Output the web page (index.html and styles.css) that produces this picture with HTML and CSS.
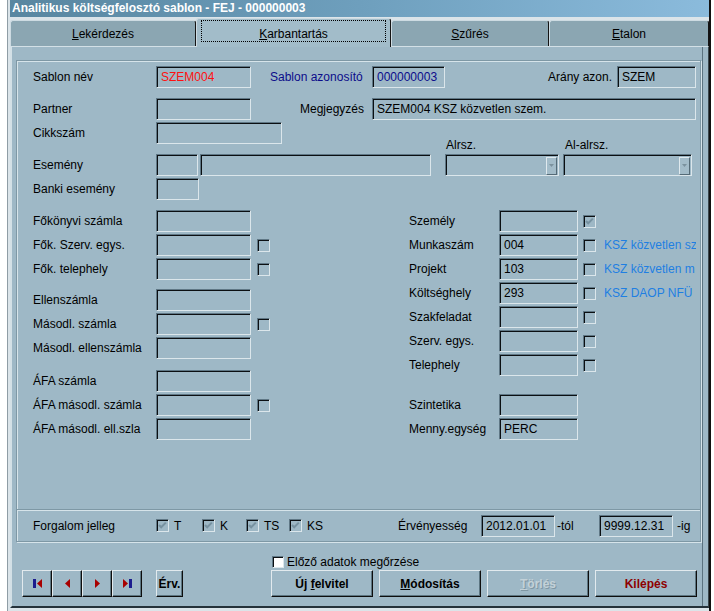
FILE: index.html
```html
<!DOCTYPE html>
<html lang="hu">
<head>
<meta charset="utf-8">
<title>Analitikus költségfelosztó sablon</title>
<link rel="stylesheet" href="styles.css">
</head>
<body>
<div class="win">
  <div class="titlebar">Analitikus költségfelosztó sablon - FEJ - 000000003</div>
  <div class="tabs">
    <div class="tab t1"><span><u>L</u>ekérdezés</span></div>
    <div class="tab t2 active"><span><u>K</u>arbantartás</span></div>
    <div class="tab t3"><span><u>S</u>zűrés</span></div>
    <div class="tab t4"><span><u>E</u>talon</span></div>
  </div>
  <div class="panel">
    <div class="group main">
      <div class="row">
        <span class="lbl lw">Sablon név</span>
        <span class="inp w95 red">SZEM004</span>
        <span class="lbl navy az">Sablon azonosító</span>
        <span class="inp w73 navy">000000003</span>
        <span class="lbl arany">Arány azon.</span>
        <span class="inp w79">SZEM</span>
      </div>
      <div class="row mt10">
        <span class="lbl lw">Partner</span>
        <span class="inp w95"></span>
        <span class="lbl megj">Megjegyzés</span>
        <span class="inp w324">SZEM004 KSZ közvetlen szem.</span>
      </div>
      <div class="row mt2">
        <span class="lbl lw">Cikkszám</span>
        <span class="inp w126"></span>
        <span class="lbl sub alrsz">Alrsz.</span>
        <span class="lbl sub">Al-alrsz.</span>
      </div>
      <div class="row mt10">
        <span class="lbl lw">Esemény</span>
        <span class="inp w42"></span>
        <span class="inp w231 ml2"></span>
        <span class="inp combo w114 ml14"><span class="drop"><svg width="5" height="3" viewBox="0 0 5 3"><path d="M0 0H5L2.5 3Z" fill="#7b929e"/></svg></span></span>
        <span class="inp combo w129 ml4"><span class="drop"><svg width="5" height="3" viewBox="0 0 5 3"><path d="M0 0H5L2.5 3Z" fill="#7b929e"/></svg></span></span>
      </div>
      <div class="row mt2">
        <span class="lbl lw">Banki esemény</span>
        <span class="inp w43"></span>
      </div>

      <div class="lower">
        <div class="lcol">
          <div class="row"><span class="lbl lw">Főkönyvi számla</span><span class="inp w95"></span></div>
          <div class="row"><span class="lbl lw">Fők. Szerv. egys.</span><span class="inp w95"></span><span class="cb ml6"></span></div>
          <div class="row"><span class="lbl lw">Fők. telephely</span><span class="inp w95"></span><span class="cb ml6"></span></div>
          <div class="row sp7"><span class="lbl lw">Ellenszámla</span><span class="inp w95"></span></div>
          <div class="row"><span class="lbl lw">Másodl. számla</span><span class="inp w95"></span><span class="cb ml6"></span></div>
          <div class="row"><span class="lbl lw">Másodl. ellenszámla</span><span class="inp w95"></span></div>
          <div class="row sp9"><span class="lbl lw">ÁFA számla</span><span class="inp w95"></span></div>
          <div class="row"><span class="lbl lw">ÁFA másodl. számla</span><span class="inp w95"></span><span class="cb ml6"></span></div>
          <div class="row"><span class="lbl lw">ÁFA másodl. ell.szla</span><span class="inp w95"></span></div>
        </div>
        <div class="rcol">
          <div class="row"><span class="lbl rw">Személy</span><span class="inp w79"></span><span class="cb ml5"><svg width="11" height="11" viewBox="0 0 11 11"><path d="M2 5L4.2 7.3L8.8 2.6" fill="none" stroke="#7792a1" stroke-width="2"/></svg></span></div>
          <div class="row"><span class="lbl rw">Munkaszám</span><span class="inp w79">004</span><span class="cb ml5"></span><span class="link">KSZ közvetlen sz</span></div>
          <div class="row"><span class="lbl rw">Projekt</span><span class="inp w79">103</span><span class="cb ml5"></span><span class="link">KSZ közvetlen m</span></div>
          <div class="row"><span class="lbl rw">Költséghely</span><span class="inp w79">293</span><span class="cb ml5"></span><span class="link">KSZ DAOP NFÜ</span></div>
          <div class="row"><span class="lbl rw">Szakfeladat</span><span class="inp w79"></span><span class="cb ml5"></span></div>
          <div class="row"><span class="lbl rw">Szerv. egys.</span><span class="inp w79"></span><span class="cb ml5"></span></div>
          <div class="row"><span class="lbl rw">Telephely</span><span class="inp w79"></span><span class="cb ml5"></span></div>
          <div class="row sp16"><span class="lbl rw">Szintetika</span><span class="inp w79"></span></div>
          <div class="row"><span class="lbl rw">Menny.egység</span><span class="inp w79">PERC</span></div>
        </div>
      </div>
    </div>

    <div class="group forg">
      <span class="lbl lw">Forgalom jelleg</span>
      <span class="fitem f46"><span class="cb"><svg width="11" height="11" viewBox="0 0 11 11"><path d="M2 5L4.2 7.3L8.8 2.6" fill="none" stroke="#7792a1" stroke-width="2"/></svg></span><span>T</span></span>
      <span class="fitem f44"><span class="cb"><svg width="11" height="11" viewBox="0 0 11 11"><path d="M2 5L4.2 7.3L8.8 2.6" fill="none" stroke="#7792a1" stroke-width="2"/></svg></span><span>K</span></span>
      <span class="fitem f43"><span class="cb"><svg width="11" height="11" viewBox="0 0 11 11"><path d="M2 5L4.2 7.3L8.8 2.6" fill="none" stroke="#7792a1" stroke-width="2"/></svg></span><span>TS</span></span>
      <span class="fitem f109"><span class="cb"><svg width="11" height="11" viewBox="0 0 11 11"><path d="M2 5L4.2 7.3L8.8 2.6" fill="none" stroke="#7792a1" stroke-width="2"/></svg></span><span>KS</span></span>
      <span class="lbl erv">Érvényesség</span>
      <span class="inp w74">2012.01.01</span>
      <span class="lbl tol">-tól</span>
      <span class="inp w74">9999.12.31</span>
      <span class="lbl ml4">-ig</span>
    </div>

    <div class="keep">
      <span class="cb white"></span>
      <span class="lbl">Előző adatok megőrzése</span>
    </div>

    <div class="btnrow">
      <span class="btn nav"><svg width="9" height="9" viewBox="0 0 9 9"><rect x="0" y="0" width="3" height="9" fill="#1c1c8e"/><path d="M9 0V9L4 4.5Z" fill="#a80000"/></svg></span>
      <span class="btn nav"><svg width="5" height="9" viewBox="0 0 5 9"><path d="M5 0V9L0 4.5Z" fill="#a80000"/></svg></span>
      <span class="btn nav"><svg width="5" height="9" viewBox="0 0 5 9"><path d="M0 0V9L5 4.5Z" fill="#a80000"/></svg></span>
      <span class="btn nav"><svg width="9" height="9" viewBox="0 0 9 9"><path d="M0 0V9L5 4.5Z" fill="#a80000"/><rect x="6" y="0" width="3" height="9" fill="#1c1c8e"/></svg></span>
      <span class="btn erv-btn"><span>Érv.</span></span>
      <span class="btn wide uj"><span>Új <u>f</u>elvitel</span></span>
      <span class="btn wide ml6"><span><u>M</u>ódosítás</span></span>
      <span class="btn wide ml6 disabled"><span><u>T</u>örlés</span></span>
      <span class="btn wide ml6 exit"><span>Kilépés</span></span>
    </div>
  </div>
</div>
</body>
</html>
```

FILE: styles.css
```css
body {
  margin: 0;
  background: #ffffff;
  font-family: "Liberation Sans", Arial, sans-serif;
  font-size: 12px;
  color: #000;
}

.win {
  margin-left: 7px;
  width: 699px;
  height: 611px;
  border-left: 1px solid #8f9da5;
  border-right: 2px solid #111;
  padding-left: 2px;
  background: #dbe4e9;
}

.titlebar {
  height: 17px;
  line-height: 17px;
  padding-left: 2px;
  background: linear-gradient(90deg, #5886a0 0%, #6e9fbd 50%, #8bbbdc 100%);
  color: #fff;
  font-weight: bold;
  white-space: nowrap;
}

.tabs {
  display: flex;
  align-items: flex-end;
  height: 28px;
  margin-top: 1px;
}

.tab {
  box-sizing: border-box;
  height: 26px;
  flex: none;
  background: #8ba6b2;
  border-top: 1px solid #cddbe2;
  border-left: 1px solid #cddbe2;
  border-right: 1px solid #141414;
  border-radius: 3px 3px 0 0;
  display: flex;
  justify-content: center;
  padding-top: 6px;
  line-height: 14px;
}

.tab.active {
  height: 29px;
  margin-bottom: -1px;
  padding-top: 8px;
  background: #a2bcc9;
  position: relative;
  z-index: 1;
}

.tab.active::after {
  content: "";
  position: absolute;
  left: 4px;
  right: 4px;
  top: 1px;
  bottom: 5px;
  border: 1px dotted #000;
}

.t1 { width: 186px; }
.t2 { width: 195px; }
.t3 { width: 158px; }
.t4 { width: 160px; }

.panel {
  box-sizing: border-box;
  height: 562px;
  background: #9eb8c6;
  border-top: 1px solid #d3e0e6;
  border-left: 2px solid #d3e0e6;
  border-right: 1px solid #3a474d;
  border-bottom: 2px solid #25323a;
  padding-left: 4px;
  padding-top: 13px;
  box-shadow: inset -5px 0 0 #9eb8c6, inset -6px 0 0 #5b7380;
}

.group {
  box-sizing: border-box;
  width: 685px;
  border: 1px solid #7e98a5;
  box-shadow: inset 1px 1px 0 #d6e4ea, 1px 1px 0 #d6e4ea;
}

.main {
  height: 450px;
  padding: 5px 0 0 16px;
}

.forg {
  height: 32px;
  border-top: none;
  box-shadow: inset 1px 0 0 #d6e4ea, 1px 1px 0 #d6e4ea;
  display: flex;
  align-items: center;
  padding-left: 16px;
}

.row {
  display: flex;
  align-items: center;
  height: 22px;
}

.lbl {
  white-space: nowrap;
  line-height: 14px;
  flex: none;
}

.lw { width: 123px; }
.rw { width: 90px; }

.navy { color: #0c0c8a; }
.red { color: #ff1010; }

.az { margin-left: 19px; width: 102px; }
.arany { margin-left: 103px; width: 69px; }
.megj { margin-left: 49px; width: 72px; }
.sub { align-self: flex-end; margin-bottom: -8px; }
.alrsz { margin-left: 164px; width: 119px; }

.mt2 { margin-top: 2px; }
.mt10 { margin-top: 10px; }
.ml2 { margin-left: 2px; }
.ml4 { margin-left: 4px; }
.ml5 { margin-left: 5px; }
.ml6 { margin-left: 6px; }
.ml14 { margin-left: 14px; }

.inp {
  box-sizing: border-box;
  flex: none;
  height: 22px;
  line-height: 20px;
  padding-left: 4px;
  border: 1px solid;
  border-color: #5f7785 #dbe6eb #dbe6eb #5f7785;
  box-shadow: inset 1px 1px 0 #0b0f12;
  white-space: nowrap;
  overflow: hidden;
}

.w42 { width: 42px; }
.w43 { width: 43px; }
.w73 { width: 73px; }
.w74 { width: 74px; }
.w79 { width: 79px; }
.w95 { width: 95px; }
.w114 { width: 114px; }
.w126 { width: 126px; }
.w129 { width: 129px; }
.w231 { width: 231px; }
.w324 { width: 324px; }

.combo {
  display: flex;
  justify-content: flex-end;
  align-items: center;
  padding: 0 1px 0 0;
}

.drop {
  box-sizing: border-box;
  width: 11px;
  height: 18px;
  margin-top: 1px;
  border: 1px solid;
  border-color: #dfe9ee #556b77 #556b77 #dfe9ee;
  background: #a3bcc9;
  display: flex;
  align-items: center;
  justify-content: center;
}

.lower {
  display: flex;
  margin-top: 10px;
}

.lcol {
  width: 376px;
  flex: none;
  display: flex;
  flex-direction: column;
  gap: 2px;
}

.rcol {
  display: flex;
  flex-direction: column;
  gap: 2px;
}

.sp7 { margin-top: 7px; }
.sp9 { margin-top: 9px; }
.sp16 { margin-top: 16px; }

.cb {
  box-sizing: border-box;
  flex: none;
  width: 13px;
  height: 13px;
  border: 1px solid;
  border-color: #5f7785 #dbe6eb #dbe6eb #5f7785;
  box-shadow: inset 1px 1px 0 #0b0f12;
  display: flex;
}

.cb.white {
  width: 12px;
  height: 12px;
  background: #fff;
}

.link {
  margin-left: 8px;
  width: 92px;
  overflow: hidden;
  white-space: nowrap;
  color: #1f7fe2;
  line-height: 14px;
}

.fitem {
  display: flex;
  align-items: center;
  gap: 5px;
  flex: none;
  line-height: 14px;
}

.f46 { width: 46px; }
.f44 { width: 44px; }
.f43 { width: 43px; }
.f109 { width: 109px; }

.erv { width: 83px; }
.tol { margin-left: 2px; width: 42px; }

.keep {
  display: flex;
  align-items: center;
  gap: 3px;
  height: 13px;
  margin: 13px 0 0 256px;
}

.btnrow {
  display: flex;
  height: 27px;
  margin: 2px 0 0 6px;
}

.btn {
  box-sizing: border-box;
  flex: none;
  height: 27px;
  display: flex;
  align-items: center;
  justify-content: center;
  border: 1px solid;
  border-color: #e2eaee #0d0d0d #0d0d0d #e2eaee;
  box-shadow: inset -1px -1px 0 #5c7581;
  font-weight: bold;
  white-space: nowrap;
}

.nav { width: 30px; }
.erv-btn { width: 27px; margin-left: 14px; }
.wide { width: 102px; }
.uj { margin-left: 88px; }
.disabled { color: #c3d1d8; text-shadow: 1px 1px 0 #7f97a4; }
.exit { color: #8e0000; }
```
